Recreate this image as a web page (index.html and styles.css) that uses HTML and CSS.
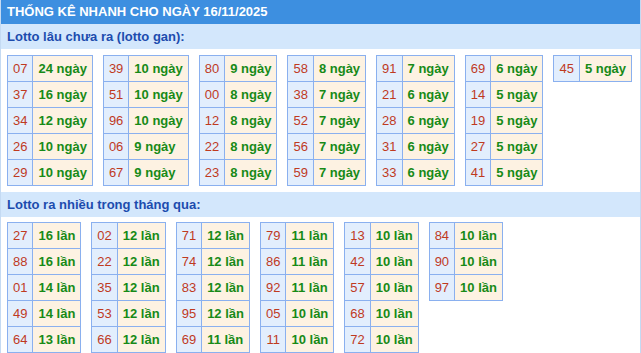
FILE: index.html
```html
<!DOCTYPE html>
<html lang="vi">
<head>
<meta charset="utf-8">
<title>Thống kê nhanh</title>
<link rel="stylesheet" href="styles.css">
</head>
<body>
<div class="box">
  <div class="title">THỐNG KÊ NHANH CHO NGÀY 16/11/2025</div>
  <div class="sub">Lotto lâu chưa ra (lotto gan):</div>
  <div class="tables tables-gan">
    <table><tr><td class="n">07</td><td class="v">24 ngày</td></tr><tr><td class="n">37</td><td class="v">16 ngày</td></tr><tr><td class="n">34</td><td class="v">12 ngày</td></tr><tr><td class="n">26</td><td class="v">10 ngày</td></tr><tr><td class="n">29</td><td class="v">10 ngày</td></tr></table>
    <table><tr><td class="n">39</td><td class="v">10 ngày</td></tr><tr><td class="n">51</td><td class="v">10 ngày</td></tr><tr><td class="n">96</td><td class="v">10 ngày</td></tr><tr><td class="n">06</td><td class="v">9 ngày</td></tr><tr><td class="n">67</td><td class="v">9 ngày</td></tr></table>
    <table><tr><td class="n">80</td><td class="v">9 ngày</td></tr><tr><td class="n">00</td><td class="v">8 ngày</td></tr><tr><td class="n">12</td><td class="v">8 ngày</td></tr><tr><td class="n">22</td><td class="v">8 ngày</td></tr><tr><td class="n">23</td><td class="v">8 ngày</td></tr></table>
    <table><tr><td class="n">58</td><td class="v">8 ngày</td></tr><tr><td class="n">38</td><td class="v">7 ngày</td></tr><tr><td class="n">52</td><td class="v">7 ngày</td></tr><tr><td class="n">56</td><td class="v">7 ngày</td></tr><tr><td class="n">59</td><td class="v">7 ngày</td></tr></table>
    <table><tr><td class="n">91</td><td class="v">7 ngày</td></tr><tr><td class="n">21</td><td class="v">6 ngày</td></tr><tr><td class="n">28</td><td class="v">6 ngày</td></tr><tr><td class="n">31</td><td class="v">6 ngày</td></tr><tr><td class="n">33</td><td class="v">6 ngày</td></tr></table>
    <table><tr><td class="n">69</td><td class="v">6 ngày</td></tr><tr><td class="n">14</td><td class="v">5 ngày</td></tr><tr><td class="n">19</td><td class="v">5 ngày</td></tr><tr><td class="n">27</td><td class="v">5 ngày</td></tr><tr><td class="n">41</td><td class="v">5 ngày</td></tr></table>
    <table><tr><td class="n">45</td><td class="v">5 ngày</td></tr></table>
  </div>
  <div class="sub">Lotto ra nhiều trong tháng qua:</div>
  <div class="tables tables-hot">
    <table><tr><td class="n">27</td><td class="v">16 lần</td></tr><tr><td class="n">88</td><td class="v">16 lần</td></tr><tr><td class="n">01</td><td class="v">14 lần</td></tr><tr><td class="n">49</td><td class="v">14 lần</td></tr><tr><td class="n">64</td><td class="v">13 lần</td></tr></table>
    <table><tr><td class="n">02</td><td class="v">12 lần</td></tr><tr><td class="n">22</td><td class="v">12 lần</td></tr><tr><td class="n">35</td><td class="v">12 lần</td></tr><tr><td class="n">53</td><td class="v">12 lần</td></tr><tr><td class="n">66</td><td class="v">12 lần</td></tr></table>
    <table><tr><td class="n">71</td><td class="v">12 lần</td></tr><tr><td class="n">74</td><td class="v">12 lần</td></tr><tr><td class="n">83</td><td class="v">12 lần</td></tr><tr><td class="n">95</td><td class="v">12 lần</td></tr><tr><td class="n">69</td><td class="v">11 lần</td></tr></table>
    <table><tr><td class="n">79</td><td class="v">11 lần</td></tr><tr><td class="n">86</td><td class="v">11 lần</td></tr><tr><td class="n">92</td><td class="v">11 lần</td></tr><tr><td class="n">05</td><td class="v">10 lần</td></tr><tr><td class="n">11</td><td class="v">10 lần</td></tr></table>
    <table><tr><td class="n">13</td><td class="v">10 lần</td></tr><tr><td class="n">42</td><td class="v">10 lần</td></tr><tr><td class="n">57</td><td class="v">10 lần</td></tr><tr><td class="n">68</td><td class="v">10 lần</td></tr><tr><td class="n">72</td><td class="v">10 lần</td></tr></table>
    <table><tr><td class="n">84</td><td class="v">10 lần</td></tr><tr><td class="n">90</td><td class="v">10 lần</td></tr><tr><td class="n">97</td><td class="v">10 lần</td></tr></table>
  </div>
</div>
</body>
</html>
```

FILE: styles.css
```css
html, body {
  margin: 0;
  padding: 0;
  background: #ffffff;
}
body {
  font-family: "Liberation Sans", Arial, sans-serif;
  font-size: 13px;
}
.box {
  width: 639px;
  border-left: 1px solid #c4daf3;
  border-right: 1px solid #c4daf3;
}
.title {
  height: 24px;
  line-height: 24px;
  padding-left: 6px;
  background: #3d8fe0;
  color: #ffffff;
  font-weight: bold;
  font-size: 13px;
}
.sub {
  height: 25px;
  line-height: 25px;
  padding-left: 6px;
  background: #d3e7fc;
  color: #1c4cae;
  font-weight: bold;
  font-size: 13px;
}
.tables {
  display: flex;
  align-items: flex-start;
  gap: 10px;
  padding-left: 6px;
}
.tables-gan {
  padding-top: 6px;
  padding-bottom: 6px;
}
.tables-hot {
  padding-top: 5px;
  padding-bottom: 2px;
}
table {
  border-collapse: collapse;
  border: 1px solid #8ab0ef;
}
td {
  border: 1px solid #8ab0ef;
  height: 25px;
  line-height: 25px;
  padding: 0 5px;
  white-space: nowrap;
}
td.n {
  background: #e2eefd;
  color: #bf3a1f;
  text-align: center;
}
td.v {
  background: #fdf2e2;
  color: #178a17;
  font-weight: bold;
}
```
